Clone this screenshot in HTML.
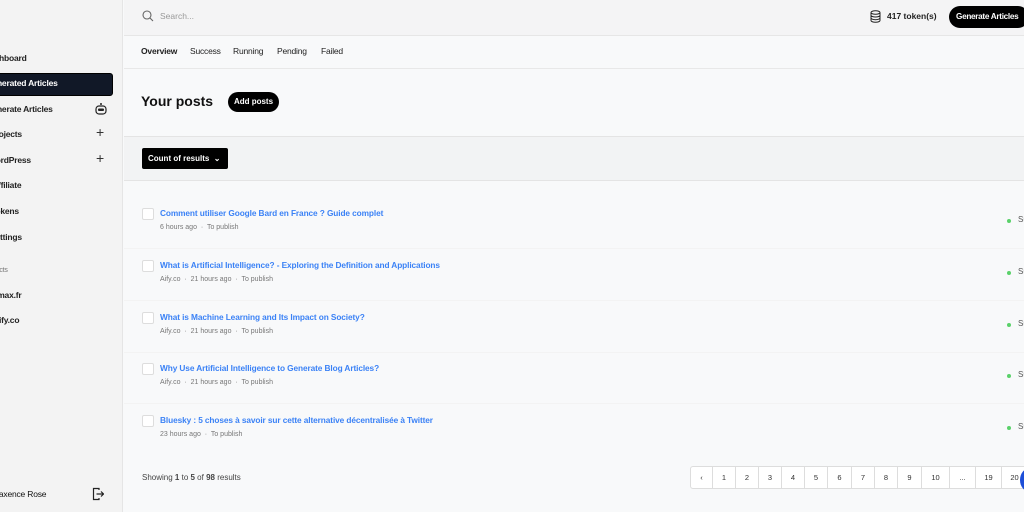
<!DOCTYPE html>
<html><head><style>
*{box-sizing:border-box;margin:0;padding:0}
body{width:1024px;height:512px;overflow:hidden;background:#f8f9fa;font-family:"Liberation Sans",sans-serif;position:relative;color:#111}
.abs{position:absolute;white-space:nowrap}
#side{position:absolute;left:0;top:0;width:123px;height:512px;background:#f3f3f3;border-right:1px solid #e5e5e5}
.si{position:absolute;font-size:8.5px;font-weight:bold;color:#222;letter-spacing:-0.2px}
.top{position:absolute;left:124px;top:0;right:0;height:36px;background:#f4f4f5;border-bottom:1px solid #e6e6e6}
.tabs{position:absolute;left:124px;top:36px;right:0;height:33px;border-bottom:1px solid #e8e8e8}
.tab{position:absolute;top:46px;font-size:8.5px;color:#222;letter-spacing:-0.2px}
.filter{position:absolute;left:124px;top:136px;right:0;height:45px;background:#f2f3f4;border-top:1px solid #e4e4e4;border-bottom:1px solid #e4e4e4}
.row{position:absolute;left:124px;right:0;height:52px;border-bottom:1px solid #f3f3f3}
.cb{position:absolute;left:18px;width:12px;height:12px;border:1px solid #ddd;border-radius:2px;background:#fff}
.t{position:absolute;left:36px;font-size:8.3px;color:#3b82f6;letter-spacing:-0.1px;white-space:nowrap;font-weight:bold}
.m{position:absolute;left:36px;font-size:7px;color:#777;white-space:nowrap}
.dot{position:absolute;left:883px;width:4px;height:4px;border-radius:50%;background:#5ad16a}
.st{position:absolute;left:894px;font-size:8px;color:#555}
.pg{position:absolute;top:466px;height:23px;border:1px solid #ddd;background:#fff;font-size:7.5px;color:#333;display:flex;align-items:center;justify-content:center;border-left:none}
</style></head><body>
<div id="side">
<div class="si" style="left:-16px;top:53px">Dashboard</div>
<div style="position:absolute;left:-10px;top:73px;width:123px;height:23px;background:#111827;border-radius:3px;border:1px solid #000"></div>
<div class="si" style="left:-14px;top:78px;color:#fff">Generated Articles</div>
<div class="si" style="left:-14px;top:104px">Generate Articles</div>
<svg class="abs" style="left:94px;top:102px" width="14" height="14" viewBox="0 0 14 14"><circle cx="7" cy="2" r="1" fill="#222"/><rect x="2" y="4" width="10" height="8" rx="3" fill="none" stroke="#222" stroke-width="1.2"/><rect x="4" y="6.5" width="6" height="2.5" rx="1" fill="#222"/></svg>
<div class="si" style="left:-10px;top:129px">Projects</div>
<div class="abs" style="left:96px;top:124px;font-size:14px;color:#333">+</div>
<div class="si" style="left:-12px;top:155px">WordPress</div>
<div class="abs" style="left:96px;top:150px;font-size:14px;color:#333">+</div>
<div class="si" style="left:-8px;top:180px">Affiliate</div>
<div class="si" style="left:-9px;top:206px">Tokens</div>
<div class="si" style="left:-10px;top:232px">Settings</div>
<div class="si" style="left:-16px;top:267px;font-size:7px;font-weight:normal;color:#777">Projects</div>
<div class="si" style="left:-19px;top:290px">Stormax.fr</div>
<div class="si" style="left:-7px;top:315px">Aify.co</div>
<div class="si" style="left:-8px;top:489px;font-weight:normal;color:#111">Maxence Rose</div>
<svg class="abs" style="left:92px;top:487px" width="12" height="14" viewBox="0 0 12 14"><path d="M7 3V1.5H1.5v11H7V11" fill="none" stroke="#222" stroke-width="1.2"/><path d="M4.5 7h7M9 4.5L11.5 7 9 9.5" fill="none" stroke="#222" stroke-width="1.2"/></svg>
</div>
<div class="top"></div>
<svg class="abs" style="left:142px;top:10px" width="12" height="12" viewBox="0 0 12 12"><circle cx="5" cy="5" r="4" fill="none" stroke="#666" stroke-width="1.1"/><path d="M8 8l3 3" stroke="#666" stroke-width="1.1"/></svg>
<div class="abs" style="left:160px;top:11px;font-size:8.5px;color:#999">Search...</div>
<svg class="abs" style="left:870px;top:10px" width="11" height="13" viewBox="0 0 11 13"><ellipse cx="5.5" cy="2.5" rx="4.5" ry="1.8" fill="none" stroke="#222"/><path d="M1 2.5v8c0 1 2 1.8 4.5 1.8S10 11.5 10 10.5v-8M1 5.2c0 1 2 1.8 4.5 1.8S10 6.2 10 5.2M1 7.9c0 1 2 1.8 4.5 1.8S10 8.9 10 7.9" fill="none" stroke="#222"/></svg>
<div class="abs" style="left:887px;top:11px;font-size:8.5px;font-weight:bold;color:#222">417 token(s)</div>
<div class="abs" style="left:949px;top:6px;width:80px;height:22px;background:#000;border-radius:11px;color:#fff;font-size:8.2px;font-weight:bold;line-height:22px;padding-left:7px;letter-spacing:-0.3px">Generate Articles</div>
<div class="tabs"></div>
<div class="tab" style="left:141px;font-weight:bold">Overview</div>
<div class="tab" style="left:190px">Success</div>
<div class="tab" style="left:233px">Running</div>
<div class="tab" style="left:277px">Pending</div>
<div class="tab" style="left:321px">Failed</div>
<div class="abs" style="left:141px;top:93px;font-size:14px;font-weight:bold;color:#111">Your posts</div>
<div class="abs" style="left:228px;top:92px;width:51px;height:20px;background:#000;border-radius:10px;color:#fff;font-size:8px;font-weight:bold;line-height:20px;text-align:center">Add posts</div>
<div class="filter"></div>
<div class="abs" style="left:142px;top:148px;width:86px;height:21px;background:#000;border-radius:2px;color:#fff;font-size:8px;font-weight:bold;line-height:21px;padding-left:6px">Count of results &nbsp;⌄</div>

<div class="row" style="top:197px"><div class="cb" style="top:11px"></div><div class="t" style="top:11px">Comment utiliser Google Bard en France ? Guide complet</div><div class="m" style="top:27px">6 hours ago &nbsp;·&nbsp; To publish</div><div class="dot" style="top:22px"></div><div class="st" style="top:18px">Su</div></div>
<div class="row" style="top:249px"><div class="cb" style="top:11px"></div><div class="t" style="top:11px">What is Artificial Intelligence? - Exploring the Definition and Applications</div><div class="m" style="top:27px">Aify.co &nbsp;·&nbsp; 21 hours ago &nbsp;·&nbsp; To publish</div><div class="dot" style="top:22px"></div><div class="st" style="top:18px">Su</div></div>
<div class="row" style="top:301px"><div class="cb" style="top:11px"></div><div class="t" style="top:11px">What is Machine Learning and Its Impact on Society?</div><div class="m" style="top:27px">Aify.co &nbsp;·&nbsp; 21 hours ago &nbsp;·&nbsp; To publish</div><div class="dot" style="top:22px"></div><div class="st" style="top:18px">Su</div></div>
<div class="row" style="top:352px"><div class="cb" style="top:11px"></div><div class="t" style="top:11px">Why Use Artificial Intelligence to Generate Blog Articles?</div><div class="m" style="top:27px">Aify.co &nbsp;·&nbsp; 21 hours ago &nbsp;·&nbsp; To publish</div><div class="dot" style="top:22px"></div><div class="st" style="top:18px">Su</div></div>
<div class="row" style="top:404px;border:none"><div class="cb" style="top:11px"></div><div class="t" style="top:11px">Bluesky : 5 choses à savoir sur cette alternative décentralisée à Twitter</div><div class="m" style="top:27px">23 hours ago &nbsp;·&nbsp; To publish</div><div class="dot" style="top:22px"></div><div class="st" style="top:18px">Su</div></div>

<div class="abs" style="left:142px;top:473px;font-size:8px;color:#444">Showing <b>1</b> to <b>5</b> of <b>98</b> results</div>
<div class="pg" style="left:690px;width:23px;border-left:1px solid #ddd;border-radius:3px 0 0 3px">‹</div>
<div class="pg" style="left:713px;width:23px">1</div>
<div class="pg" style="left:736px;width:23px">2</div>
<div class="pg" style="left:759px;width:23px">3</div>
<div class="pg" style="left:782px;width:23px">4</div>
<div class="pg" style="left:805px;width:23px">5</div>
<div class="pg" style="left:828px;width:24px">6</div>
<div class="pg" style="left:852px;width:23px">7</div>
<div class="pg" style="left:875px;width:23px">8</div>
<div class="pg" style="left:898px;width:24px">9</div>
<div class="pg" style="left:922px;width:28px">10</div>
<div class="pg" style="left:950px;width:26px">...</div>
<div class="pg" style="left:976px;width:26px">19</div>
<div class="pg" style="left:1002px;width:26px">20</div>
<div class="abs" style="left:1020px;top:468px;width:20px;height:24px;border-radius:50%;background:#1d4ed8"></div>
</body></html>
